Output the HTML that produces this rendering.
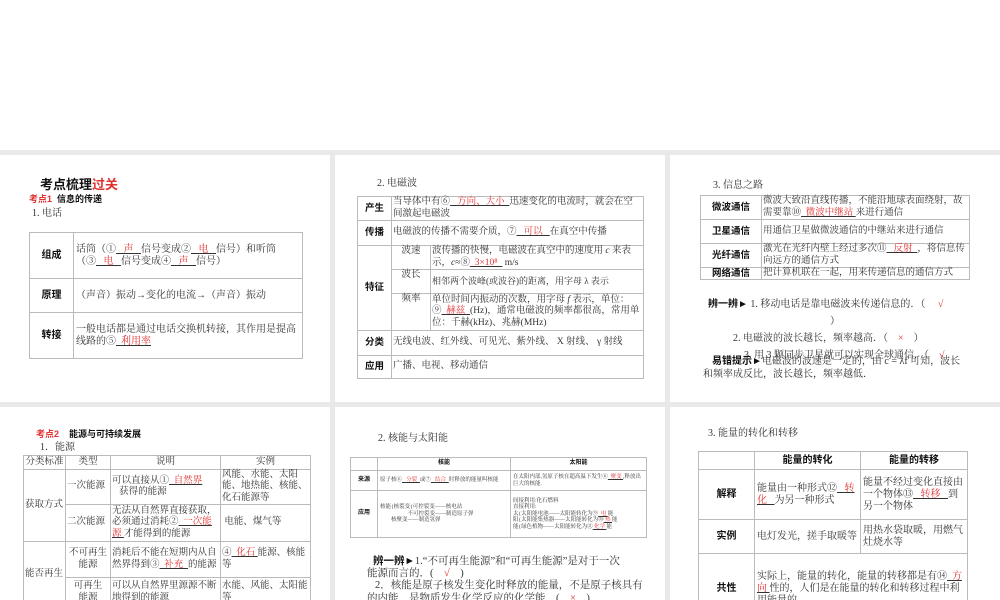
<!DOCTYPE html>
<html><head><meta charset="utf-8"><style>
body{margin:0;width:1000px;height:600px;position:relative;overflow:hidden;background:#fff;font-family:"Liberation Serif","Noto Serif CJK SC","Noto Sans CJK SC",serif;color:#333;font-size:10px}
.bg{position:absolute;left:0;top:150px;width:1000px;height:450px;background:#e9e9e9}
.p{position:absolute;background:#fff;overflow:hidden}
.a{position:absolute;white-space:nowrap;line-height:1.2}
.r{color:#e03030}
.b{font-weight:bold;font-family:"Liberation Sans","Noto Sans CJK SC",sans-serif;color:#111}
table{position:absolute;border-collapse:collapse;table-layout:fixed}
td{border:1px solid #bbb;padding:0 2px;line-height:1.2;vertical-align:middle;font-size:10px}
td.h{text-align:center;font-weight:bold;font-family:"Liberation Sans","Noto Sans CJK SC",sans-serif;color:#111}
.s td{font-size:9.5px;padding:0 1px}
u{color:#e03030;text-decoration-color:#333}
.bl{color:#2aa0c8}
</style></head><body>
<div class="bg"></div>

<div class="p" style="left:0;top:155px;width:330px;height:247px">
<div class="a b" style="left:40px;top:22px;font-size:13px">考点梳理<span class="r">过关</span></div>
<div class="a b" style="left:29px;top:39px;font-size:9px"><span class="r">考点1</span>&nbsp; 信息的传递</div>
<div class="a" style="left:32px;top:53px;font-size:10px">1. 电话</div>
<table style="left:29px;top:77px;width:274px">
<col style="width:44px"><col>
<tr style="height:46px"><td class="h">组成</td><td>话筒（①<u>&nbsp;&nbsp;&nbsp;声&nbsp;&nbsp;&nbsp;</u>信号变成②<u>&nbsp;&nbsp;&nbsp;电&nbsp;&nbsp;&nbsp;</u>信号）和听筒（③<u>&nbsp;&nbsp;&nbsp;电&nbsp;&nbsp;&nbsp;</u>信号变成④<u>&nbsp;&nbsp;&nbsp;声&nbsp;&nbsp;&nbsp;</u>信号）</td></tr>
<tr style="height:34px"><td class="h">原理</td><td>（声音）振动→变化的电流→（声音）振动</td></tr>
<tr style="height:46px"><td class="h">转接</td><td>一般电话都是通过电话交换机转接，其作用是提高线路的⑤<u>&nbsp;&nbsp;利用率</u></td></tr>
</table>
</div>

<div class="p" style="left:335px;top:155px;width:330px;height:247px">
<div class="a" style="left:42px;top:23px;font-size:10px">2. 电磁波</div>
<table class="s" style="left:22px;top:41px;width:287px">
<col style="width:34px"><col style="width:39px"><col>
<tr style="height:24px"><td class="h">产生</td><td colspan="2">当导体中有⑥<u>&nbsp;&nbsp;&nbsp;方向、大小&nbsp;&nbsp;</u>迅速变化的电流时，就会在空间激起电磁波</td></tr>
<tr style="height:25px"><td class="h">传播</td><td colspan="2">电磁波的传播不需要介质，⑦<u>&nbsp;&nbsp;&nbsp;可以&nbsp;&nbsp;&nbsp;</u>在真空中传播</td></tr>
<tr style="height:24px"><td class="h" rowspan="3">特征</td><td style="text-align:center;vertical-align:top">波速</td><td>波传播的快慢，电磁波在真空中的速度用 <i>c</i> 来表示，<i>c</i>≈⑧<u>&nbsp;&nbsp;3×10⁸&nbsp;&nbsp;</u> m/s</td></tr>
<tr style="height:24px"><td style="text-align:center;vertical-align:top">波长</td><td style="font-size:9px;white-space:nowrap">相邻两个波峰(或波谷)的距离，用字母 λ 表示</td></tr>
<tr style="height:37px"><td style="text-align:center;vertical-align:top">频率</td><td>单位时间内振动的次数，用字母 <i>f</i> 表示，单位：⑨<u>&nbsp;&nbsp;赫兹&nbsp;&nbsp;</u>(Hz)，通常电磁波的频率都很高，常用单位：千赫(kHz)、兆赫(MHz)</td></tr>
<tr style="height:25px"><td class="h">分类</td><td colspan="2">无线电波、红外线、可见光、紫外线、 X 射线、 γ 射线</td></tr>
<tr style="height:23px"><td class="h">应用</td><td colspan="2">广播、电视、移动通信</td></tr>
</table>
</div>

<div class="p" style="left:670px;top:155px;width:330px;height:247px">
<div class="a" style="left:43px;top:25px;font-size:10px">3. 信息之路</div>
<table class="s" style="left:30px;top:40px;width:270px">
<col style="width:61px"><col>
<tr style="height:24px"><td class="h">微波通信</td><td>微波大致沿直线传播，不能沿地球表面绕射，故需要靠⑩<u>&nbsp;&nbsp;微波中继站&nbsp;</u>来进行通信</td></tr>
<tr style="height:24px"><td class="h">卫星通信</td><td>用通信卫星做微波通信的中继站来进行通信</td></tr>
<tr style="height:24px"><td class="h">光纤通信</td><td>激光在光纤内壁上经过多次⑪<u>&nbsp;&nbsp;&nbsp;反射&nbsp;&nbsp;</u>，将信息传向远方的通信方式</td></tr>
<tr style="height:12px"><td class="h" style="line-height:11px">网络通信</td><td style="line-height:11px">把计算机联在一起，用来传递信息的通信方式</td></tr>
</table>
<div class="a" style="left:38px;top:144px"><span class="r b">辨一辨►</span> 1. 移动电话是靠电磁波来传递信息的．（&nbsp;&nbsp;&nbsp;&nbsp;&nbsp;<span class="r">√</span></div>
<div class="a" style="left:160px;top:161px">）</div>
<div class="a" style="left:63px;top:178px">2. 电磁波的波长越长，频率越高．（&nbsp;&nbsp;&nbsp;&nbsp;<span class="r">×</span>&nbsp;&nbsp;&nbsp;&nbsp;）</div>
<div class="a" style="left:74px;top:195px">3. 用 3 颗同步卫星就可以实现全球通信．（&nbsp;&nbsp;&nbsp;&nbsp;<span class="r">√</span></div>
<div class="a" style="left:42px;top:201px"><span class="r b">易错提示►</span>电磁波的波速是一定的，由 c = λf 可知，波长</div>
<div class="a" style="left:33px;top:214px">和频率成反比，波长越长，频率越低．</div>
</div>

<div class="p" style="left:0;top:407px;width:330px;height:193px">
<div class="a b" style="left:36px;top:22px;font-size:9px"><span class="r">考点2</span>&nbsp;&nbsp;&nbsp; 能源与可持续发展</div>
<div class="a" style="left:40px;top:35px">1．能源</div>
<table class="s" style="left:23px;top:48px;width:288px">
<col style="width:42px"><col style="width:45px"><col style="width:110px"><col>
<tr style="height:14px"><td style="text-align:center;white-space:nowrap">分类标准</td><td style="text-align:center">类型</td><td style="text-align:center">说明</td><td style="text-align:center">实例</td></tr>
<tr style="height:34px"><td rowspan="2" style="white-space:nowrap">获取方式</td><td style="white-space:nowrap">一次能源</td><td>可以直接从①<u>&nbsp;&nbsp;自然界</u><br>&nbsp;&nbsp;&nbsp;获得的能源</td><td>风能、水能、太阳能、地热能、核能、化石能源等</td></tr>
<tr style="height:37px"><td style="white-space:nowrap">二次能源</td><td>无法从自然界直接获取，必须通过消耗②<u>&nbsp;&nbsp;一次能源&nbsp;</u>才能得到的能源</td><td>&nbsp;电能、煤气等</td></tr>
<tr style="height:36px"><td rowspan="2" style="white-space:nowrap">能否再生</td><td style="text-align:center">不可再生<br>能源</td><td>消耗后不能在短期内从自然界得到③<u>&nbsp;&nbsp;补充&nbsp;&nbsp;</u>的能源</td><td>④<u>&nbsp;&nbsp;化石&nbsp;</u>能源、核能等</td></tr>
<tr style="height:30px"><td style="text-align:center">可再生<br>能源</td><td>可以从自然界里源源不断地得到的能源</td><td>水能、风能、太阳能等</td></tr>
</table>
</div>

<div class="p" style="left:335px;top:407px;width:330px;height:193px">
<div class="a" style="left:43px;top:26px;font-size:10px">2. 核能与太阳能</div>
<table style="left:15px;top:50px;width:297px">
<col style="width:27px"><col style="width:133px"><col>
<tr style="height:13px"><td class="h" style="font-size:6px"></td><td class="h" style="font-size:6px">核能</td><td class="h" style="font-size:6px">太阳能</td></tr>
<tr style="height:20px"><td class="h" style="font-size:6px">来源</td><td style="font-size:5.5px">原子核⑥<span class="bl"><u>&nbsp;&nbsp; 分裂 &nbsp;</u></span>或⑦<span class="bl"><u>&nbsp;&nbsp; 结合 &nbsp;</u></span>时释放的能量叫核能</td><td style="font-size:5.5px">在太阳内部,氢原子核在超高温下发生⑥<span class="bl"><u>&nbsp; 聚变 </u></span>,释放出巨大的核能.</td></tr>
<tr style="height:47px"><td class="h" style="font-size:6px">应用</td><td style="font-size:5.5px">核能{核裂变{可控裂变——核电站<br>&nbsp;&nbsp;&nbsp;&nbsp;&nbsp;&nbsp;&nbsp;&nbsp;&nbsp;&nbsp;&nbsp;&nbsp;&nbsp;&nbsp;&nbsp;&nbsp;&nbsp;&nbsp;&nbsp;&nbsp;不可控裂变——制造原子弹<br>&nbsp;&nbsp;&nbsp;&nbsp;&nbsp;&nbsp;&nbsp;&nbsp;核聚变——制造氢弹</td><td style="font-size:5.5px">间接利用:化石燃料<br>直接利用:<br>太{太阳能电池——太阳能转化为⑨<span class="bl"><u>&nbsp; 电 </u></span>能<br>阳{太阳能集热器——太阳能转化为⑩<span class="bl"><u> 热 </u></span>能<br>能{绿色植物——太阳能转化为⑪<span class="bl"><u> 化学 </u></span>能</td></tr>
</table>
<div class="a" style="left:38px;top:148px;font-size:10.5px"><span class="r b">辨一辨►</span>1.“不可再生能源”和“可再生能源”是对于一次</div>
<div class="a" style="left:32px;top:161px;font-size:10.5px">能源而言的．(&nbsp;&nbsp;&nbsp;&nbsp;<span class="r">√</span>&nbsp;&nbsp;&nbsp;&nbsp;)</div>
<div class="a" style="left:40px;top:173px;font-size:10.5px">2．核能是原子核发生变化时释放的能量，不是原子核具有</div>
<div class="a" style="left:32px;top:186px;font-size:10.5px">的内能，是物质发生化学反应的化学能．(&nbsp;&nbsp;&nbsp;&nbsp;<span class="r">×</span>&nbsp;&nbsp;&nbsp;&nbsp;)</div>
</div>

<div class="p" style="left:670px;top:407px;width:330px;height:193px">
<div class="a" style="left:38px;top:21px;font-size:10px">3. 能量的转化和转移</div>
<table style="left:28px;top:44px;width:270px">
<col style="width:56px"><col style="width:106px"><col>
<tr style="height:18px"><td class="h">&nbsp;</td><td class="h">能量的转化</td><td class="h">能量的转移</td></tr>
<tr style="height:50px"><td class="h">解释</td><td>能量由一种形式⑫<u>&nbsp;&nbsp;&nbsp;转化&nbsp;&nbsp;&nbsp;</u>为另一种形式</td><td>能量不经过变化直接由一个物体⑬<u>&nbsp;&nbsp;&nbsp;转移&nbsp;&nbsp;&nbsp;</u>到另一个物体</td></tr>
<tr style="height:34px"><td class="h">实例</td><td>电灯发光，搓手取暖等</td><td>用热水袋取暖，用燃气灶烧水等</td></tr>
<tr style="height:70px"><td class="h">共性</td><td colspan="2">实际上，能量的转化，能量的转移都是有⑭<u>&nbsp;&nbsp;方向&nbsp;</u>性的，人们是在能量的转化和转移过程中利用能量的</td></tr>
</table>
</div>
</body></html>
